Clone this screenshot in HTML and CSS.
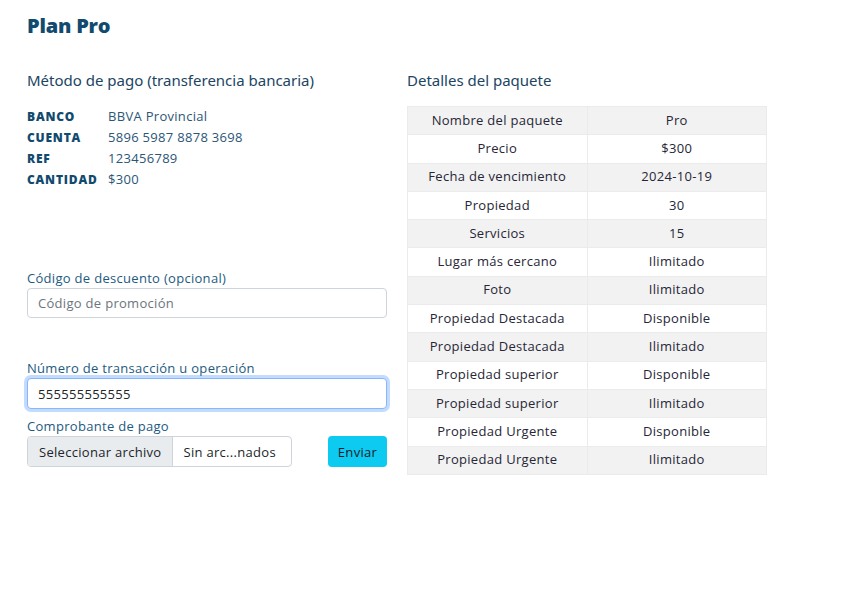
FILE: index.html
```html
<!DOCTYPE html>
<html lang="es">
<head>
<meta charset="utf-8">
<link rel="stylesheet" href="styles.css">
</head>
<body>
<main class="page">
  <h1 class="title">Plan Pro</h1>
  <div class="columns">
    <section class="col">
      <h2 class="subtitle">Método de pago (transferencia bancaria)</h2>
      <dl class="bank">
        <dt>BANCO</dt><dd>BBVA Provincial</dd>
        <dt>CUENTA</dt><dd>5896 5987 8878 3698</dd>
        <dt>REF</dt><dd>123456789</dd>
        <dt>CANTIDAD</dt><dd>$300</dd>
      </dl>
      <form class="form">
        <div class="field discount">
          <label class="label" for="promo">Código de descuento (opcional)</label>
          <input class="input" id="promo" type="text" placeholder="Código de promoción">
        </div>
        <div class="field txn">
          <label class="label" for="txn">Número de transacción u operación</label>
          <input class="input focused" id="txn" type="text" value="555555555555">
        </div>
        <div class="field">
          <span class="label">Comprobante de pago</span>
          <div class="file-row">
            <div class="file">
              <span class="file-btn">Seleccionar archivo</span>
              <span class="file-name">Sin arc...nados</span>
            </div>
            <button class="send" type="button">Enviar</button>
          </div>
        </div>
      </form>
    </section>
    <section class="col">
      <h2 class="subtitle">Detalles del paquete</h2>
      <table class="details">
        <tr><td>Nombre del paquete</td><td>Pro</td></tr>
        <tr><td>Precio</td><td>$300</td></tr>
        <tr><td>Fecha de vencimiento</td><td>2024-10-19</td></tr>
        <tr><td>Propiedad</td><td>30</td></tr>
        <tr><td>Servicios</td><td>15</td></tr>
        <tr><td>Lugar más cercano</td><td>Ilimitado</td></tr>
        <tr><td>Foto</td><td>Ilimitado</td></tr>
        <tr><td>Propiedad Destacada</td><td>Disponible</td></tr>
        <tr><td>Propiedad Destacada</td><td>Ilimitado</td></tr>
        <tr><td>Propiedad superior</td><td>Disponible</td></tr>
        <tr><td>Propiedad superior</td><td>Ilimitado</td></tr>
        <tr><td>Propiedad Urgente</td><td>Disponible</td></tr>
        <tr><td>Propiedad Urgente</td><td>Ilimitado</td></tr>
      </table>
    </section>
  </div>
</main>
</body>
</html>
```

FILE: styles.css
```css
* { box-sizing: border-box; }
body {
  margin: 0;
  background: #fff;
  font-family: "Open Sans", "Noto Sans", sans-serif;
  color: #212529;
  letter-spacing: 0.3px;
}
.page {
  padding: 14px 0 0 27px;
  width: 767px;
}
.title {
  margin: 0;
  font-family: "Open Sans", sans-serif;
  font-weight: 800;
  font-size: 20px;
  line-height: 24px;
  color: #114a6e;
  letter-spacing: -0.2px;
}
.columns {
  display: grid;
  grid-template-columns: 360px 360px;
  column-gap: 20px;
  margin-top: 32px;
}
.subtitle {
  margin: 0;
  font-family: "Noto Sans", sans-serif;
  font-weight: 400;
  font-size: 15px;
  line-height: 20px;
  color: #1b4563;
  letter-spacing: 0;
}
.bank {
  display: grid;
  grid-template-columns: 81px 1fr;
  margin: 16px 0 0;
  row-gap: 0;
  font-size: 13px;
  line-height: 21px;
}
.bank dt {
  font-weight: 800;
  font-size: 12px;
  letter-spacing: 0.8px;
  color: #114a6e;
}
.bank dd {
  margin: 0;
  color: #2b5676;
}
.form { margin-top: 80px; }
.field { display: flex; flex-direction: column; }
.label {
  font-size: 13px;
  line-height: 17px;
  color: #1d5a80;
  margin-bottom: 1px;
}
.input {
  height: 30px;
  width: 360px;
  padding: 0 10px;
  border: 1px solid #ced4da;
  border-radius: 4px;
  font: inherit;
  font-size: 13px;
  letter-spacing: 0.3px;
  color: #212529;
  outline: none;
}
.input::placeholder { color: #6c757d; }
.input.focused {
  border-color: #86b7fe;
  box-shadow: 0 0 0 3px rgba(13, 110, 253, 0.25);
  height: 31px;
}
.discount { margin-bottom: 42px; }
.txn { margin-bottom: 9px; }
.file-row {
  display: flex;
  justify-content: space-between;
  align-items: center;
}
.file {
  display: flex;
  width: 265px;
  height: 31px;
  border: 1px solid #ced4da;
  border-radius: 4px;
  overflow: hidden;
  font-size: 13px;
}
.file-btn {
  display: flex;
  align-items: center;
  padding: 0 11px;
  background: #e9ecef;
  border-right: 1px solid #ced4da;
  color: #212529;
  white-space: nowrap;
}
.file-name {
  display: flex;
  align-items: center;
  padding: 0 10px;
  color: #212529;
  white-space: nowrap;
}
.send {
  width: 59px;
  height: 31px;
  border: none;
  border-radius: 4px;
  background: #0dcaf0;
  color: #1a1a2a;
  font: inherit;
  font-size: 13px;
  letter-spacing: 0.3px;
  padding: 0;
}
.details {
  margin-top: 16px;
  width: 360px;
  border-collapse: collapse;
  font-size: 13px;
}
.details td {
  width: 50%;
  height: 28.3px;
  padding: 0 0 2px;
  text-align: center;
  border: 1px solid #ebebeb;
  color: #272636;
}
.details tr:nth-child(odd) td { background: #f2f2f2; }
```
